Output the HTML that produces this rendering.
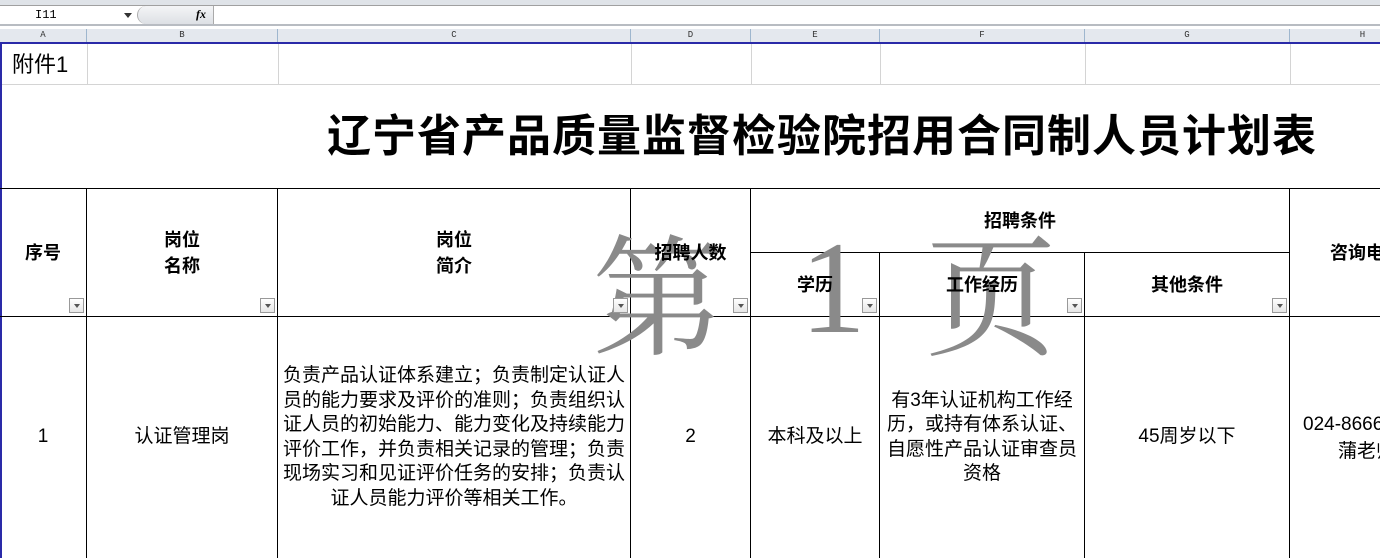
<!DOCTYPE html>
<html><head><meta charset="utf-8"><style>
body{margin:0;width:1380px;height:558px;overflow:hidden;background:#fff;position:relative;font-family:"Liberation Sans","Noto Sans CJK SC",sans-serif;}
.a{position:absolute;}
.t{position:absolute;display:flex;align-items:center;justify-content:center;text-align:center;color:#000;}
.b{font-weight:bold;font-size:18px;line-height:26px;}
.n{font-size:19px;line-height:24.5px;}
.vl{position:absolute;width:1px;background:#000;}
.hl{position:absolute;height:1px;background:#000;}
.gv{position:absolute;width:1px;background:#d4d4d4;}
.ch{position:absolute;top:29px;height:13px;font-size:9px;color:#333;text-align:center;line-height:13px;font-family:"Liberation Mono",monospace;border-right:1px solid #9eb6ce;}
.dd{position:absolute;width:15px;height:15px;border:1px solid #999;background:linear-gradient(#fff,#e6e6e6);box-sizing:border-box;}
.dd:after{content:"";position:absolute;left:4px;top:5px;border-left:3px solid transparent;border-right:3px solid transparent;border-top:4px solid #555;}
.wm{position:absolute;color:#8a8a8a;font-family:"Noto Serif CJK SC","Liberation Serif",serif;font-size:132px;line-height:132px;}
</style></head><body>
<div class="a" style="left:0;top:0;width:1380px;height:5px;background:#dfe3e8;border-bottom:1px solid #a0a0a0"></div>
<div class="a" style="left:0;top:6px;width:1380px;height:18px;background:#fff;border-bottom:2px solid #b8bcc2"></div>
<div class="a" style="left:35px;top:8px;font-size:12px;font-family:'Liberation Mono',monospace">I11</div>
<div class="a" style="left:124px;top:13px;border-left:4px solid transparent;border-right:4px solid transparent;border-top:5px solid #333"></div>
<div class="a" style="left:137px;top:6px;width:76px;height:18px;background:linear-gradient(#f4f5f7,#dde0e5);border-left:1px solid #aaa;border-radius:9px 0 0 9px"></div>
<div class="a" style="left:196px;top:7px;font-size:12px;font-style:italic;font-weight:bold;font-family:'Liberation Serif',serif">fx</div>
<div class="a" style="left:213px;top:6px;width:1px;height:18px;background:#aaa"></div>
<div class="a" style="left:0;top:26px;width:1380px;height:3px;background:#fff"></div>
<div class="a" style="left:0;top:29px;width:1380px;height:13px;background:#e4e8ee;border-bottom:2px solid #2a2aa8"></div>
<div class="ch" style="left:0;width:86px">A</div>
<div class="ch" style="left:87px;width:190px">B</div>
<div class="ch" style="left:278px;width:352px">C</div>
<div class="ch" style="left:631px;width:119px">D</div>
<div class="ch" style="left:751px;width:128px">E</div>
<div class="ch" style="left:880px;width:204px">F</div>
<div class="ch" style="left:1085px;width:204px">G</div>
<div class="ch" style="left:1290px;width:145px;border-right:none">H</div>
<div class="a" style="left:0;top:43px;width:2px;height:515px;background:#2a2aa8"></div>
<div class="gv" style="left:87px;top:44px;height:41px"></div>
<div class="gv" style="left:278px;top:44px;height:41px"></div>
<div class="gv" style="left:631px;top:44px;height:41px"></div>
<div class="gv" style="left:751px;top:44px;height:41px"></div>
<div class="gv" style="left:880px;top:44px;height:41px"></div>
<div class="gv" style="left:1085px;top:44px;height:41px"></div>
<div class="gv" style="left:1290px;top:44px;height:41px"></div>
<div class="a" style="left:2px;top:84px;width:1378px;height:1px;background:#d4d4d4"></div>
<div class="a" style="left:12px;top:51px;font-size:22px;line-height:28px">附件1</div>
<div class="a" style="left:327px;top:110px;font-size:44px;font-weight:bold;line-height:54px;letter-spacing:1px;white-space:nowrap">辽宁省产品质量监督检验院招用合同制人员计划表</div>
<div class="hl" style="left:0;top:188px;width:1380px"></div>
<div class="hl" style="left:751px;top:252px;width:539px"></div>
<div class="hl" style="left:0;top:316px;width:1380px"></div>
<div class="vl" style="left:86px;top:188px;height:370px"></div>
<div class="vl" style="left:277px;top:188px;height:370px"></div>
<div class="vl" style="left:630px;top:188px;height:370px"></div>
<div class="vl" style="left:750px;top:188px;height:370px"></div>
<div class="vl" style="left:879px;top:252px;height:306px"></div>
<div class="vl" style="left:1084px;top:252px;height:306px"></div>
<div class="vl" style="left:1289px;top:188px;height:370px"></div>
<div class="wm" style="left:592px;top:222px">第</div>
<div class="wm" style="left:800px;top:222px;font-family:'Liberation Serif',serif">1</div>
<div class="wm" style="left:925px;top:222px">页</div>
<div class="t b" style="left:0;top:189px;width:86px;height:127px">序号</div>
<div class="t b" style="left:87px;top:189px;width:190px;height:127px">岗位<br>名称</div>
<div class="t b" style="left:278px;top:189px;width:352px;height:127px">岗位<br>简介</div>
<div class="t b" style="left:631px;top:189px;width:119px;height:127px">招聘人数</div>
<div class="t b" style="left:751px;top:189px;width:538px;height:63px">招聘条件</div>
<div class="t b" style="left:751px;top:253px;width:128px;height:63px">学历</div>
<div class="t b" style="left:880px;top:253px;width:204px;height:63px">工作经历</div>
<div class="t b" style="left:1085px;top:253px;width:204px;height:63px">其他条件</div>
<div class="a b" style="left:1330px;top:240px;white-space:nowrap">咨询电话</div>
<div class="dd" style="left:69px;top:298px"></div>
<div class="dd" style="left:260px;top:298px"></div>
<div class="dd" style="left:613px;top:298px"></div>
<div class="dd" style="left:733px;top:298px"></div>
<div class="dd" style="left:862px;top:298px"></div>
<div class="dd" style="left:1067px;top:298px"></div>
<div class="dd" style="left:1272px;top:298px"></div>
<div class="t n" style="left:0;top:317px;width:86px;height:241px">1</div>
<div class="t n" style="left:87px;top:317px;width:190px;height:241px">认证管理岗</div>
<div class="t n" style="left:264px;top:317px;width:380px;height:241px;white-space:nowrap">负责产品认证体系建立；负责制定认证人<br>员的能力要求及评价的准则；负责组织认<br>证人员的初始能力、能力变化及持续能力<br>评价工作，并负责相关记录的管理；负责<br>现场实习和见证评价任务的安排；负责认<br>证人员能力评价等相关工作。</div>
<div class="t n" style="left:631px;top:317px;width:119px;height:241px">2</div>
<div class="t n" style="left:751px;top:317px;width:128px;height:241px">本科及以上</div>
<div class="t n" style="left:870px;top:317px;width:224px;height:241px;white-space:nowrap">有3年认证机构工作经<br>历，或持有体系认证、<br>自愿性产品认证审查员<br>资格</div>
<div class="t n" style="left:1085px;top:317px;width:204px;height:241px">45周岁以下</div>
<div class="a n" style="left:1303px;top:413px;white-space:nowrap">024-86665</div>
<div class="a n" style="left:1338px;top:440px;white-space:nowrap">蒲老师</div>
</body></html>
